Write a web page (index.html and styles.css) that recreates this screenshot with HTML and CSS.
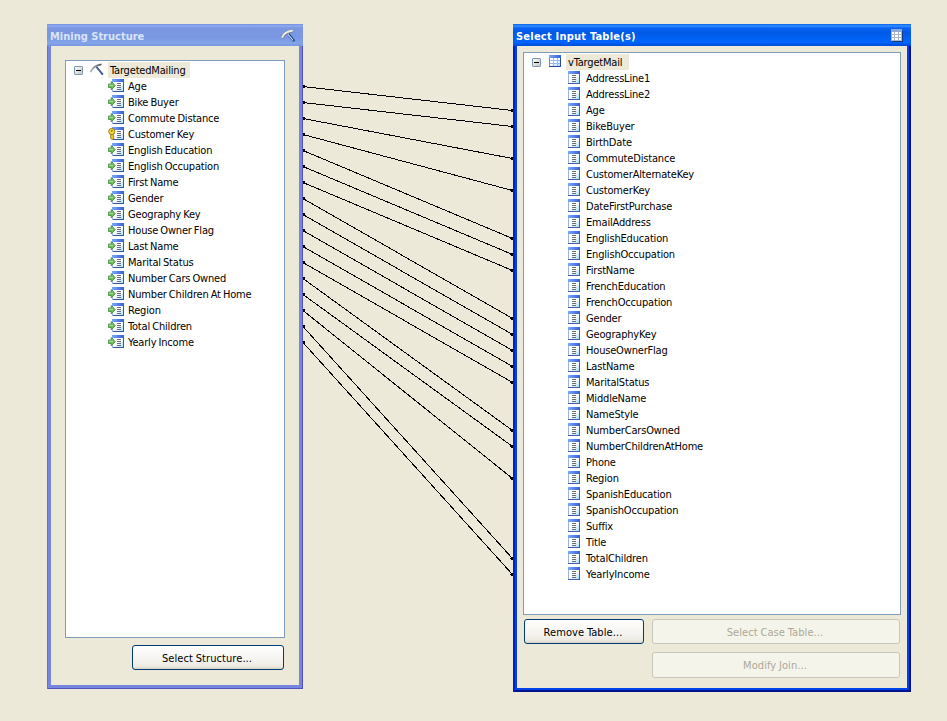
FILE: index.html
```html
<!DOCTYPE html>
<html lang="en">
<head>
<meta charset="utf-8">
<title>Mining Structure</title>
<link rel="stylesheet" href="styles.css">
</head>
<body>
<svg class="defs" aria-hidden="true">
  <defs>
    <linearGradient id="page" x1="0" y1="0" x2="1" y2="1"><stop offset=".45" stop-color="#fff"/><stop offset="1" stop-color="#a9dcfc"/></linearGradient>
    <linearGradient id="bar" x1="0" y1="0" x2="1" y2="0"><stop offset="0" stop-color="#78a8f8"/><stop offset="1" stop-color="#3560d8"/></linearGradient>
    <linearGradient id="box" x1="0" y1="0" x2="1" y2="1"><stop offset="0" stop-color="#fff"/><stop offset="1" stop-color="#c8c2b0"/></linearGradient>
    <linearGradient id="steel" x1="0" y1="0" x2="1" y2="0"><stop offset="0" stop-color="#b4b4b4"/><stop offset="1" stop-color="#4c545e"/></linearGradient>
  </defs>
  <symbol id="column" viewBox="0 0 12 13">
    <rect width="12" height="13" fill="#9bb2df"/><rect x="1" y="3" width="10" height="9" fill="url(#page)"/>
    <rect width="12" height="3" fill="url(#bar)"/><path d="M11 3h1v10H0v-1h11z" fill="#4460a8"/>
    <path d="M4 4.5h4M4 6.5h4M4 8.5h4M4 10.5h4" stroke="#666c78"/>
  </symbol>
  <symbol id="input" viewBox="0 0 16 13">
    <rect x="4" width="12" height="13" fill="#9bb2df"/><rect x="5" y="3" width="10" height="9" fill="url(#page)"/>
    <rect x="4" width="12" height="3" fill="url(#bar)"/><path d="M15 3h1v10H5v-1h10z" fill="#3b56a2"/>
    <path d="M9 4.5h4M9 6.5h4M9 8.5h4M9 10.5h4" stroke="#666c78"/>
    <path d="M.5 5h2.700V2.500L7.300 6.700 3.200 11V8.500H.5z" fill="#69b957" stroke="#4b9549" stroke-width=".9"/><path d="M1 6.300h4" stroke="#b9e6a5"/>
  </symbol>
  <symbol id="key" viewBox="0 0 16 13">
    <rect x="4" width="12" height="13" fill="#9bb2df"/><rect x="5" y="3" width="10" height="9" fill="url(#page)"/>
    <rect x="4" width="12" height="3" fill="url(#bar)"/><path d="M15 3h1v10H5v-1h10z" fill="#3b56a2"/>
    <path d="M9 4.5h4M9 6.5h4M9 8.5h4M9 10.5h4" stroke="#666c78"/>
    <path d="M2.600 7h2.600v1.500l1 .8-1 .8 1 .8-1.800 1.900-1.800-1.300z" fill="#e5c421" stroke="#866b0b" stroke-width=".7"/>
    <circle cx="3.800" cy="4.500" r="3.100" fill="#f2d638" stroke="#927511" stroke-width=".9"/><circle cx="3.800" cy="3.800" r=".9" fill="#806812"/>
  </symbol>
  <symbol id="table" viewBox="0 0 12 12">
    <rect width="12" height="12" fill="#6f8fd0"/><rect x="1" y="3" width="10" height="8" fill="url(#page)"/><rect width="12" height="3" fill="url(#bar)"/>
    <path d="M4.500 3v8M8.500 3v8M1 5.500h10M1 8.500h10" stroke="#9dbbe9"/><path d="M11.500 3v8.500H0" fill="none" stroke="#2b4796"/>
  </symbol>
  <symbol id="table-light" viewBox="0 0 12 13">
    <path d="M2 2h10v11H1z" fill="#173a78"/><rect width="11" height="12" fill="#a9b6ce"/><rect width="11" height="3" fill="#8fa9de"/>
    <path d="M1 3h2v2H1zM4 3h3v2H4zM8 3h2v2H8zM1 6h2v2H1zM4 6h3v2H4zM8 6h2v2H8zM1 9h2v2H1zM4 9h3v2H4zM8 9h2v2H8z" fill="#fff"/>
  </symbol>
  <symbol id="pick" viewBox="0 0 14 13">
    <path d="M6.500 4l6.300 7.600" stroke="#23458e" stroke-width="1.800"/><path d="M6.500 4.500l5.200 6" stroke="#8aa9d7" stroke-width=".5"/>
    <path d="M.6 9.200C2 5 5 2.200 11.500 1.300" fill="none" stroke="url(#steel)" stroke-width="1.700"/>
  </symbol>
  <symbol id="pick-light" viewBox="0 0 14 14">
    <path d="M7.300 5l5.900 7.300" stroke="#173f8f" stroke-width="2.600"/><path d="M6.800 5l5.400 6.500" stroke="#dce9fb" stroke-width="1.100"/>
    <path d="M1 9.200C2 5.500 5 3 11.800 1.800" fill="none" stroke="#6f7889" stroke-width="3"/>
    <path d="M1 8.700C2 5 5 2.500 11.800 1.500" fill="none" stroke="#eeece6" stroke-width="1.900"/>
  </symbol>
  <symbol id="minus" viewBox="0 0 9 9">
    <rect x=".5" y=".5" width="8" height="8" rx=".6" fill="url(#box)" stroke="#7898b5"/><path d="M2 4.500h5" stroke="#000"/>
  </symbol>
</svg>

<main class="designer">
  <section class="window inactive">
    <header class="titlebar"><h1>Mining Structure</h1><svg class="pick-light"><use href="#pick-light"/></svg></header>
    <div class="content">
      <div class="tree">
        <div class="root"><svg class="minus"><use href="#minus"/></svg><svg class="pick"><use href="#pick"/></svg><span>TargetedMailing</span></div>
        <ul>
          <li><svg><use href="#input"/></svg>Age</li>
          <li><svg><use href="#input"/></svg>Bike Buyer</li>
          <li><svg><use href="#input"/></svg>Commute Distance</li>
          <li><svg><use href="#key"/></svg>Customer Key</li>
          <li><svg><use href="#input"/></svg>English Education</li>
          <li><svg><use href="#input"/></svg>English Occupation</li>
          <li><svg><use href="#input"/></svg>First Name</li>
          <li><svg><use href="#input"/></svg>Gender</li>
          <li><svg><use href="#input"/></svg>Geography Key</li>
          <li><svg><use href="#input"/></svg>House Owner Flag</li>
          <li><svg><use href="#input"/></svg>Last Name</li>
          <li><svg><use href="#input"/></svg>Marital Status</li>
          <li><svg><use href="#input"/></svg>Number Cars Owned</li>
          <li><svg><use href="#input"/></svg>Number Children At Home</li>
          <li><svg><use href="#input"/></svg>Region</li>
          <li><svg><use href="#input"/></svg>Total Children</li>
          <li><svg><use href="#input"/></svg>Yearly Income</li>
        </ul>
      </div>
      <div class="actions"><button>Select Structure...</button></div>
    </div>
  </section>

  <svg class="links" viewBox="303 24 210 668">
    <defs><marker id="start" viewBox="0 0 4 5" markerWidth="4" markerHeight="5" refX="0" refY="2.500" markerUnits="userSpaceOnUse"><path d="M0 1h2v3H0z"/></marker>
    <marker id="end" viewBox="0 0 4 5" markerWidth="4" markerHeight="5" refX="4" refY="2.500" markerUnits="userSpaceOnUse"><path d="M4 1H2v1H1v1h1v1h2z"/></marker></defs>
    <path d="M303 86.500L512.500 110.500"/><path d="M303 102.500L512.500 126.500"/><path d="M303 118.500L512.500 158.500"/><path d="M303 134.500L512.500 190.500"/>
    <path d="M303 150.500L512.500 238.500"/><path d="M303 166.500L512.500 254.500"/><path d="M303 182.500L512.500 270.500"/><path d="M303 198.500L512.500 318.500"/>
    <path d="M303 214.500L512.500 334.500"/><path d="M303 230.500L512.500 350.500"/><path d="M303 246.500L512.500 366.500"/><path d="M303 262.500L512.500 382.500"/>
    <path d="M303 278.500L512.500 430.500"/><path d="M303 294.500L512.500 446.500"/><path d="M303 310.500L512.500 478.500"/><path d="M303 326.500L512.500 558.500"/><path d="M303 342.500L512.500 574.500"/>
  </svg>

  <section class="window active">
    <header class="titlebar"><h1>Select Input Table(s)</h1><svg class="table-light"><use href="#table-light"/></svg></header>
    <div class="content">
      <div class="tree">
        <div class="root"><svg class="minus"><use href="#minus"/></svg><svg class="table"><use href="#table"/></svg><span>vTargetMail</span></div>
        <ul>
          <li><svg><use href="#column"/></svg>AddressLine1</li>
          <li><svg><use href="#column"/></svg>AddressLine2</li>
          <li><svg><use href="#column"/></svg>Age</li>
          <li><svg><use href="#column"/></svg>BikeBuyer</li>
          <li><svg><use href="#column"/></svg>BirthDate</li>
          <li><svg><use href="#column"/></svg>CommuteDistance</li>
          <li><svg><use href="#column"/></svg>CustomerAlternateKey</li>
          <li><svg><use href="#column"/></svg>CustomerKey</li>
          <li><svg><use href="#column"/></svg>DateFirstPurchase</li>
          <li><svg><use href="#column"/></svg>EmailAddress</li>
          <li><svg><use href="#column"/></svg>EnglishEducation</li>
          <li><svg><use href="#column"/></svg>EnglishOccupation</li>
          <li><svg><use href="#column"/></svg>FirstName</li>
          <li><svg><use href="#column"/></svg>FrenchEducation</li>
          <li><svg><use href="#column"/></svg>FrenchOccupation</li>
          <li><svg><use href="#column"/></svg>Gender</li>
          <li><svg><use href="#column"/></svg>GeographyKey</li>
          <li><svg><use href="#column"/></svg>HouseOwnerFlag</li>
          <li><svg><use href="#column"/></svg>LastName</li>
          <li><svg><use href="#column"/></svg>MaritalStatus</li>
          <li><svg><use href="#column"/></svg>MiddleName</li>
          <li><svg><use href="#column"/></svg>NameStyle</li>
          <li><svg><use href="#column"/></svg>NumberCarsOwned</li>
          <li><svg><use href="#column"/></svg>NumberChildrenAtHome</li>
          <li><svg><use href="#column"/></svg>Phone</li>
          <li><svg><use href="#column"/></svg>Region</li>
          <li><svg><use href="#column"/></svg>SpanishEducation</li>
          <li><svg><use href="#column"/></svg>SpanishOccupation</li>
          <li><svg><use href="#column"/></svg>Suffix</li>
          <li><svg><use href="#column"/></svg>Title</li>
          <li><svg><use href="#column"/></svg>TotalChildren</li>
          <li><svg><use href="#column"/></svg>YearlyIncome</li>
        </ul>
      </div>
      <div class="actions"><button>Remove Table...</button><button disabled>Select Case Table...</button><button class="modify" disabled>Modify Join...</button></div>
    </div>
  </section>
</main>
</body>
</html>
```
FILE: styles.css
```css
* { box-sizing: border-box; }
body { margin: 0; height: 721px; overflow: hidden; background: #ece9d8; color: #000; font: 11px/16px Tahoma, "DejaVu Sans Condensed", sans-serif; letter-spacing: -.18px; word-spacing: -.8px; }
svg { display: block; flex: none; }
.defs { position: absolute; width: 0; height: 0; }
.designer { display: flex; align-items: flex-start; padding: 24px 0 0 47px; }
.window { display: flex; flex-direction: column; flex: none; }
.inactive { width: 256px; height: 665px; background: #7486df; box-shadow: inset 1px 0 #6470cf, inset -1px -1px #5353c0; }
.active { width: 398px; height: 668px; background: #0042e8; box-shadow: inset 2px 0 #0523c4, inset -2px -2px #00138c; }
.titlebar { display: flex; align-items: center; justify-content: space-between; height: 22px; flex: none; padding: 3px 8px 0 3px; }
.inactive .titlebar { background: linear-gradient(#748fe2 0, #8fabf0 2px, #7b96e1 4px, #7a98e2 14px, #82a5e9 19px, #7b96e1 22px); color: #d8e4f8; }
.active .titlebar { background: linear-gradient(#0861e8 0, #3191ff 2px, #0a62f2 4px, #0059e6 9px, #0066ff 18px, #004bd5 22px); color: #fff; }
h1 { margin: 0; padding-top: 1px; font: bold 11px/16px Tahoma, "DejaVu Sans Condensed", sans-serif; letter-spacing: 0; word-spacing: 0; }
.active h1 { letter-spacing: .22px; }
.pick-light { width: 14px; height: 14px; margin-top: -2px; }
.table-light { width: 12px; height: 13px; margin-top: -2px; }
.content { flex: 1; background: #ece9d8; }
.inactive .content { margin: 0 4px 4px; padding: 14px 14px 0; }
.active .content { margin: 0 4px 4px; padding: 6px 6px 0; }
.tree { border: 1px solid #7f9db9; background: #fff; padding-top: 1px; }
.inactive .tree { height: 578px; width: 220px; }
.active .tree { height: 563px; width: 378px; }
.root { display: flex; align-items: flex-start; height: 16px; padding-left: 8px; }
.minus { width: 9px; height: 9px; margin-top: 4px; }
.pick { width: 14px; height: 13px; margin: 1px 4px 0 7px; }
.table { width: 12px; height: 12px; margin: 1px 5px 0 8px; }
.root span { background: #ece9d8; padding: 1px 2px 0; height: 16px; width: 82px; white-space: nowrap; }
.active .root span { width: 63px; }
ul { margin: 0; padding: 0 0 0 42px; list-style: none; }
.active ul { padding-left: 44px; }
li { display: flex; align-items: flex-start; gap: 4px; height: 16px; padding-top: 1px; white-space: nowrap; }
.active li { gap: 6px; }
li svg { width: 16px; height: 13px; }
.active li svg { width: 12px; }
.links { width: 210px; height: 668px; shape-rendering: crispEdges; }
.links > path { fill: none; stroke: #000; marker-start: url(#start); marker-end: url(#end); }
button { height: 25px; padding: 2px 2px 0 0; border: 1px solid #003c74; border-radius: 3px; background: linear-gradient(#fff, #f4f3ee 60%, #eceae2 88%, #d8d2c5); color: #000; font: inherit; letter-spacing: .08px; word-spacing: -.5px; }
button:disabled { border-color: #c9c7ba; background: #f5f4ea; color: #aca899; }
.inactive .actions { display: flex; justify-content: flex-end; padding: 7px 1px 0 0; }
.inactive button { width: 152px; }
.active .actions { display: grid; grid-template-columns: 120px 248px; gap: 8px; padding: 4px 0 0 1px; }
.active .modify { grid-column: 2; height: 26px; }
```
